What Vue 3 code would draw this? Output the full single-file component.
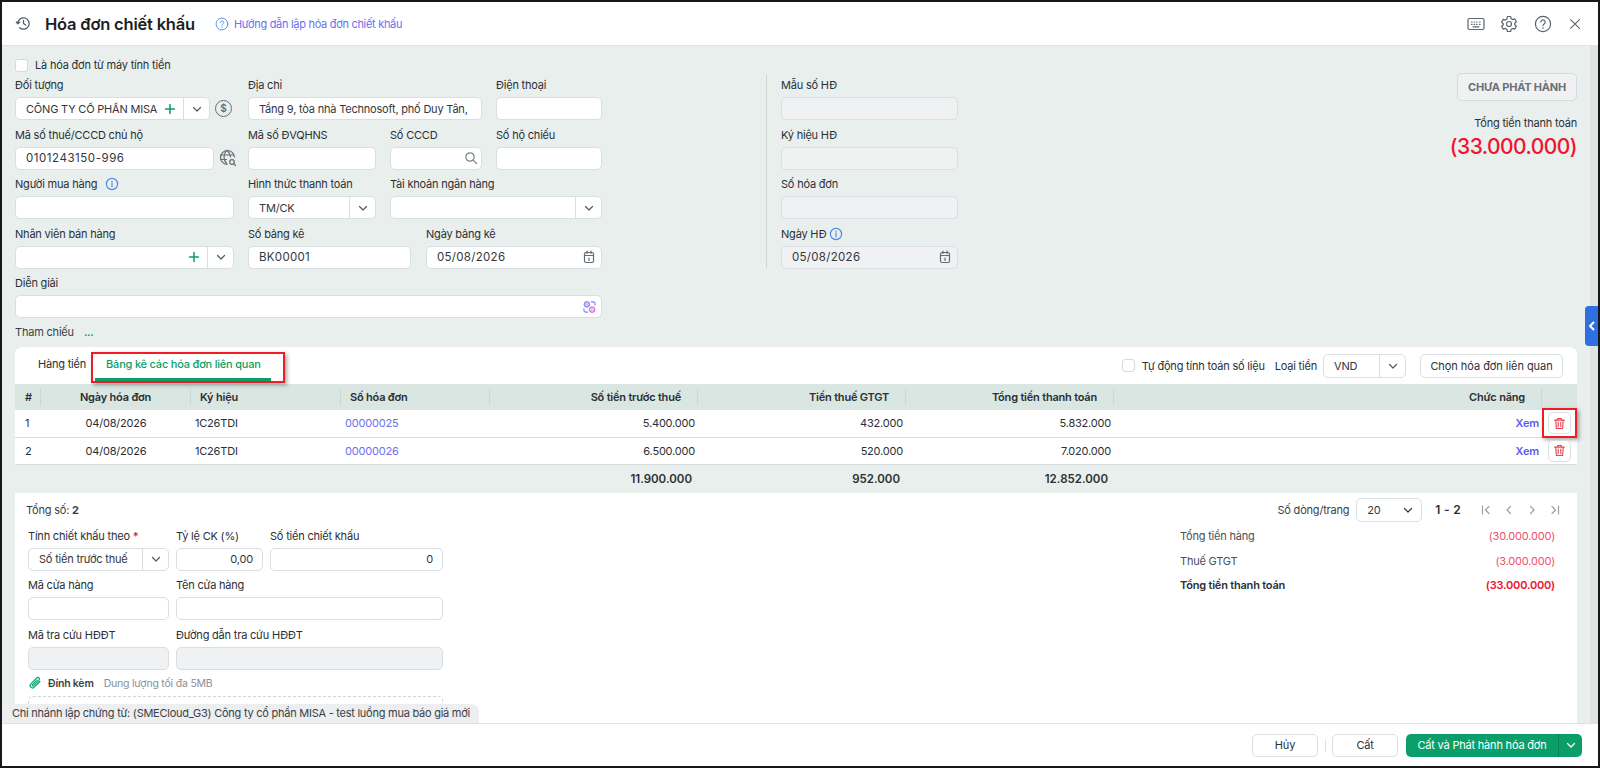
<template>
  <div class="frame">
    <svg class="defs" width="0" height="0">
      <symbol id="i-chev" viewBox="0 0 12 12"><path d="M2.500 4.500 6 8l3.500-3.500" /></symbol>
      <symbol id="i-plus" viewBox="0 0 12 12"><path d="M6 1.500v9M1.500 6h9" /></symbol>
      <symbol id="i-cal" viewBox="0 0 14 14"><rect x="2.500" y="2.500" width="9" height="10" rx="1.500" /><path d="M2.500 5.500h9M5 1v2.500M9 1v2.500M7 8v2.500" /></symbol>
      <symbol id="i-info" viewBox="0 0 14 14"><circle cx="7" cy="7" r="5.600" /><path d="M7 6.200v3.600M7 4.200v.6" /></symbol>
      <symbol id="i-help" viewBox="0 0 18 18"><circle cx="9" cy="9" r="7.600" /><path d="M6.800 7a2.200 2.200 0 1 1 3.300 2c-.7.4-1.100.8-1.100 1.600M9 12.600v.6" /></symbol>
      <symbol id="i-trash" viewBox="0 0 14 14"><path d="M1.800 3.400h10.400M5 3.200V1.600h4v1.600M3 3.400l.6 9h6.800l.6-9M5.600 5.400v5M8.400 5.400v5" /></symbol>
    </svg>

    <header class="head">
      <svg class="ic hist" viewBox="0 0 24 24"><path d="M4 12a8 8 0 1 1 2.600 5.900M1.800 9.800 4 12.400l2.600-2.200M12 7.500V12l3 2" /></svg>
      <h1 class="title">Hóa đơn chiết khấu</h1>
      <a class="guide"><svg class="ic guide-ic"><use href="#i-help" /></svg>Hướng dẫn lập hóa đơn chiết khấu</a>
      <div class="head-tools">
        <svg class="ic tool" viewBox="0 0 18 18"><rect x="1" y="3.500" width="16" height="11" rx="1.500" /><path d="M4.500 7h.6M7 7h.6M9.500 7h.6M12.500 7h.6M4.500 9.300h.6M7 9.300h.6M9.500 9.300h.6M12.500 9.300h.6M6 11.800h6" /></svg>
        <svg class="ic tool" viewBox="0 0 18 18"><path d="M7.400 1.500h3.200l.5 2.200 1.500.9 2.200-.7 1.600 2.800-1.700 1.500v1.600l1.700 1.500-1.600 2.800-2.200-.7-1.500.9-.5 2.200H7.400l-.5-2.200-1.500-.9-2.200.7-1.600-2.800 1.700-1.500V8.700L1.600 7.200l1.600-2.800 2.200.7 1.500-.9z" /><circle cx="9" cy="9" r="2.500" /></svg>
        <svg class="ic tool"><use href="#i-help" /></svg>
        <svg class="ic tool close" viewBox="0 0 18 18"><path d="m4 4 10 10M14 4 4 14" /></svg>
      </div>
    </header>

    <main class="body">
      <div class="content">
        <section class="top">
          <div class="form">
            <label class="check-row"><span class="check"></span>Là hóa đơn từ máy tính tiền</label>
            <div class="row">
              <div class="field w-195">
                <span class="lbl">Đối tượng</span>
                <div class="box">
                  <span class="val">CÔNG TY CỔ PHẦN MISA</span>
                  <svg class="ic plus"><use href="#i-plus" /></svg>
                  <span class="drop"><svg class="ic chev"><use href="#i-chev" /></svg></span>
                </div>
              </div>
              <span class="dollar">$</span>
              <div class="field w-234 ml-16">
                <span class="lbl">Địa chỉ</span>
                <div class="box"><span class="val">Tầng 9, tòa nhà Technosoft, phố Duy Tân,</span></div>
              </div>
              <div class="field w-106 ml-14">
                <span class="lbl">Điện thoại</span>
                <div class="box"></div>
              </div>
            </div>
            <div class="row">
              <div class="field w-199">
                <span class="lbl">Mã số thuế/CCCD chủ hộ</span>
                <div class="box"><span class="val spaced wide">0101243150-996</span></div>
              </div>
              <svg class="ic globe" viewBox="0 0 18 18">
                <path d="M15.500 8A7 7 0 1 0 8 15.500M1.500 6h13M1.500 10.500h6M8 1.200c-4 4-4 9.500 0 14M8 1.200c2.200 2 3.300 4.400 3.500 6.800" />
                <circle cx="13" cy="13" r="2.300" /><path d="m14.800 14.800 1.700 1.700" />
              </svg>
              <div class="field w-128 ml-11">
                <span class="lbl">Mã số ĐVQHNS</span>
                <div class="box"></div>
              </div>
              <div class="field w-92 ml-14">
                <span class="lbl">Số CCCD</span>
                <div class="box end">
                  <svg class="ic search" viewBox="0 0 14 14"><circle cx="6" cy="6" r="4.200" /><path d="m9.200 9.200 3.300 3.300" /></svg>
                </div>
              </div>
              <div class="field w-106 ml-14">
                <span class="lbl">Số hộ chiếu</span>
                <div class="box"></div>
              </div>
            </div>
            <div class="row">
              <div class="field w-219">
                <span class="lbl">Người mua hàng<svg class="ic info"><use href="#i-info" /></svg></span>
                <div class="box"></div>
              </div>
              <div class="field w-128 ml-14">
                <span class="lbl">Hình thức thanh toán</span>
                <div class="box">
                  <span class="val">TM/CK</span>
                  <span class="drop"><svg class="ic chev"><use href="#i-chev" /></svg></span>
                </div>
              </div>
              <div class="field w-212 ml-14">
                <span class="lbl">Tài khoản ngân hàng</span>
                <div class="box end">
                  <span class="drop"><svg class="ic chev"><use href="#i-chev" /></svg></span>
                </div>
              </div>
            </div>
            <div class="row">
              <div class="field w-219">
                <span class="lbl">Nhân viên bán hàng</span>
                <div class="box end">
                  <svg class="ic plus"><use href="#i-plus" /></svg>
                  <span class="drop"><svg class="ic chev"><use href="#i-chev" /></svg></span>
                </div>
              </div>
              <div class="field w-163 ml-14">
                <span class="lbl">Số bảng kê</span>
                <div class="box"><span class="val spaced">BK00001</span></div>
              </div>
              <div class="field w-176 ml-15">
                <span class="lbl">Ngày bảng kê</span>
                <div class="box">
                  <span class="val spaced">05/08/2026</span>
                  <svg class="ic cal"><use href="#i-cal" /></svg>
                </div>
              </div>
            </div>
            <div class="row">
              <div class="field w-full">
                <span class="lbl">Diễn giải</span>
                <div class="box end">
                  <svg class="ai" viewBox="0 0 14 14">
                    <circle cx="4.200" cy="4.200" r="3" fill="#c9c4f8" stroke="#7c6cf0" />
                    <circle cx="9.800" cy="9.800" r="3" fill="#f3c0f0" stroke="#c94fd8" />
                    <path d="M8.500 1.500h2.500a2 2 0 0 1 2 2v2M5.500 12.500H3a2 2 0 0 1-2-2v-2" fill="none" stroke="#6a8df0" stroke-width="1.200" />
                  </svg>
                </div>
              </div>
            </div>
          </div>

          <div class="invoice">
            <div v-for="f in invoiceFields" :key="f.label" class="field inv-field">
              <span class="lbl">{{ f.label }}<svg v-if="f.info" class="ic info info-sm"><use href="#i-info" /></svg></span>
              <div class="box disabled">
                <template v-if="f.value">
                  <span class="val spaced">{{ f.value }}</span>
                  <svg class="ic cal"><use href="#i-cal" /></svg>
                </template>
              </div>
            </div>
          </div>

          <div class="status">
            <div class="status-btn">CHƯA PHÁT HÀNH</div>
            <div class="total-lbl">Tổng tiền thanh toán</div>
            <div class="total-num">(33.000.000)</div>
          </div>
        </section>

        <div class="ref">Tham chiếu<span class="ref-dots">...</span></div>

        <section class="card">
          <div class="tabs">
            <span class="tab">Hàng tiền</span>
            <span class="tab tab-on">Bảng kê các hóa đơn liên quan<i class="mark mark-tab"></i></span>
            <div class="tabs-right">
              <span class="check"></span>
              <span class="auto">Tự động tính toán số liệu</span>
              <span class="cur-lbl">Loại tiền</span>
              <div class="box cur">
                <span class="val">VND</span>
                <span class="drop"><svg class="ic chev"><use href="#i-chev" /></svg></span>
              </div>
              <button class="btn pick">Chọn hóa đơn liên quan</button>
            </div>
          </div>

          <div class="tr th">
            <span class="c-hash">#</span>
            <span class="c-center">Ngày hóa đơn</span>
            <span class="c-th-left">Ký hiệu</span>
            <span class="c-th-left">Số hóa đơn</span>
            <span class="c-th-right">Số tiền trước thuế</span>
            <span class="c-th-right">Tiền thuế GTGT</span>
            <span class="c-th-right">Tổng tiền thanh toán</span>
            <span class="c-th-right">Chức năng</span>
            <span class="c-last"></span>
          </div>
          <div v-for="(r, i) in rows" :key="r.no" class="tr td">
            <span class="c-hash">{{ i + 1 }}</span>
            <span class="c-center">{{ r.date }}</span>
            <span class="c-left">{{ r.sign }}</span>
            <a class="c-left link">{{ r.no }}</a>
            <span class="c-right">{{ r.before }}</span>
            <span class="c-right">{{ r.tax }}</span>
            <span class="c-right">{{ r.total }}</span>
            <a class="c-right xem">Xem</a>
            <span class="c-last">
              <button class="trash"><svg class="ic trash-ic"><use href="#i-trash" /></svg></button>
              <i v-if="i === 0" class="mark mark-trash"></i>
            </span>
          </div>
          <div class="tr tf">
            <span></span><span></span><span></span><span></span>
            <span class="c-sum">11.900.000</span>
            <span class="c-sum">952.000</span>
            <span class="c-sum">12.852.000</span>
            <span></span><span></span>
          </div>

          <div class="pager">
            <span class="count">Tổng số: <b>2</b></span>
            <span class="per">Số dòng/trang</span>
            <div class="box per-box">
              <span class="val">20</span>
              <svg class="ic chev per-chev"><use href="#i-chev" /></svg>
            </div>
            <b class="range">1 - 2</b>
            <svg class="ic nav" viewBox="0 0 12 12"><path d="M2.500 2v8M9 2.500 5.500 6 9 9.500" /></svg>
            <svg class="ic nav" viewBox="0 0 12 12"><path d="M7.500 2.500 4 6l3.500 3.500" /></svg>
            <svg class="ic nav" viewBox="0 0 12 12"><path d="M4.500 2.500 8 6 4.500 9.500" /></svg>
            <svg class="ic nav" viewBox="0 0 12 12"><path d="M9.500 2v8M3 2.500 6.500 6 3 9.500" /></svg>
          </div>

          <div class="lower">
            <div class="disc">
              <div class="row">
                <div class="field w-141">
                  <span class="lbl">Tính chiết khấu theo <em class="req">*</em></span>
                  <div class="box">
                    <span class="val">Số tiền trước thuế</span>
                    <span class="drop"><svg class="ic chev"><use href="#i-chev" /></svg></span>
                  </div>
                </div>
                <div class="field w-87 ml-7">
                  <span class="lbl">Tỷ lệ CK (%)</span>
                  <div class="box"><span class="val num">0,00</span></div>
                </div>
                <div class="field w-173 ml-7">
                  <span class="lbl">Số tiền chiết khấu</span>
                  <div class="box"><span class="val num">0</span></div>
                </div>
              </div>
              <div class="row">
                <div class="field w-141">
                  <span class="lbl">Mã cửa hàng</span>
                  <div class="box"></div>
                </div>
                <div class="field w-267 ml-7">
                  <span class="lbl">Tên cửa hàng</span>
                  <div class="box"></div>
                </div>
              </div>
              <div class="row">
                <div class="field w-141">
                  <span class="lbl">Mã tra cứu HĐĐT</span>
                  <div class="box disabled"></div>
                </div>
                <div class="field w-267 ml-7">
                  <span class="lbl">Đường dẫn tra cứu HĐĐT</span>
                  <div class="box disabled"></div>
                </div>
              </div>
              <div class="attach">
                <svg class="clip" viewBox="0 0 14 14"><path d="M12 5.500 6.300 11.200a2.400 2.400 0 0 1-3.400-3.400l5.800-5.800a1.600 1.600 0 0 1 2.300 2.300L5.400 9.900a.8.800 0 0 1-1.100-1.100l5-5" /></svg>
                <b class="att-t">Đính kèm</b>
                <span class="att-s">Dung lượng tối đa 5MB</span>
              </div>
              <div class="drop-zone"></div>
            </div>

            <div class="sum">
              <div class="sum-row"><span>Tổng tiền hàng</span><span class="neg">(30.000.000)</span></div>
              <div class="sum-row"><span>Thuế GTGT</span><span class="neg">(3.000.000)</span></div>
              <div class="sum-row strong"><span>Tổng tiền thanh toán</span><span class="neg">(33.000.000)</span></div>
            </div>
          </div>
        </section>
      </div>
      <div class="scroll"></div>
      <div class="side-tab"><svg class="ic side-chev" viewBox="0 0 12 12"><path d="M7.500 2.500 4 6l3.500 3.500" /></svg></div>
      <div class="branch">Chi nhánh lập chứng từ: (SMECloud_G3) Công ty cổ phần MISA - test luồng mua báo giá mới</div>
    </main>

    <footer class="foot">
      <button class="btn act">Hủy</button>
      <span class="foot-sep"></span>
      <button class="btn act">Cất</button>
      <div class="primary">
        <span class="primary-txt">Cất và Phát hành hóa đơn</span>
        <span class="primary-drop"><svg class="ic chev"><use href="#i-chev" /></svg></span>
      </div>
    </footer>
  </div>
</template>

<script setup>
const invoiceFields = [
  { label: 'Mẫu số HĐ' },
  { label: 'Ký hiệu HĐ' },
  { label: 'Số hóa đơn' },
  { label: 'Ngày HĐ', info: true, value: '05/08/2026' },
]
const rows = [
  { date: '04/08/2026', sign: '1C26TDI', no: '00000025', before: '5.400.000', tax: '432.000', total: '5.832.000' },
  { date: '04/08/2026', sign: '1C26TDI', no: '00000026', before: '6.500.000', tax: '520.000', total: '7.020.000' },
]
</script>

<style>
html, body { margin: 0; overflow: hidden; }
</style>

<style scoped>
.frame {
  width: 1600px;
  height: 768px;
  box-sizing: border-box;
  border: 2px solid #17181a;
  display: flex;
  flex-direction: column;
  background: #fff;
  font-family: Inter, "Noto Sans", sans-serif;
  font-size: 11px;
  letter-spacing: -0.2px;
  color: #2b2f36;
}
.defs { position: absolute; }
.ic { fill: none; stroke: currentColor; stroke-width: 1.2; stroke-linecap: round; stroke-linejoin: round; flex: none; }

.head {
  height: 44px;
  flex: none;
  display: flex;
  align-items: center;
  padding-left: 13px;
  border-bottom: 1px solid #dfe3e6;
  box-sizing: border-box;
}
.hist { width: 17px; height: 17px; color: #555b63; stroke-width: 1.8; }
.title { margin: 0 0 0 13px; font-size: 16.500px; font-weight: 600; color: #1c1f24; }
.guide { display: flex; align-items: center; margin-left: 20px; color: #6b70ee; letter-spacing: -0.3px; }
.guide-ic { width: 14px; height: 14px; margin-right: 5px; color: #4f8ae6; }
.head-tools { margin-left: auto; display: flex; align-items: center; gap: 15.500px; padding-right: 15px; }
.tool { width: 18px; height: 18px; color: #5d636b; }
.close { width: 16px; height: 16px; }

.body { flex: 1; min-height: 0; display: flex; position: relative; background: #e9efed; overflow: hidden; }
.content { flex: 1; min-width: 0; padding: 11px 0 0 13px; overflow: hidden; }
.scroll { width: 8px; flex: none; background: #dfe3e3; }
.side-tab {
  position: absolute;
  right: 0;
  top: 260px;
  width: 13px;
  height: 40px;
  background: #2f6fe0;
  border-radius: 4px 0 0 4px;
  display: flex;
  align-items: center;
  justify-content: center;
  color: #fff;
}
.side-chev { width: 12px; height: 12px; stroke-width: 2; }
.branch {
  position: absolute;
  left: 0;
  bottom: 0;
  width: 467px;
  height: 19px;
  padding-left: 10px;
  line-height: 19px;
  letter-spacing: -0.25px;
  background: #eceef0;
  border-radius: 0 8px 0 0;
  color: #3a3f47;
  white-space: nowrap;
}

.top { display: flex; height: 266px; }
.form { width: 587px; flex: none; }
.check-row { display: flex; align-items: center; height: 16px; margin-bottom: 2px; gap: 7px; color: #2b2f36; }
.check { width: 13px; height: 13px; box-sizing: border-box; background: #fff; border: 1px solid #d5dade; border-radius: 3px; flex: none; }
.row { display: flex; margin-bottom: 4.500px; }
.field { display: flex; flex-direction: column; flex: none; }
.lbl { height: 20px; line-height: 20px; margin-bottom: 2px; color: #2b2f36; white-space: nowrap; display: flex; align-items: center; }
.box {
  height: 23px;
  box-sizing: border-box;
  background: #fff;
  border: 1px solid #d9dee2;
  border-radius: 5px;
  display: flex;
  align-items: center;
  color: #33373d;
  white-space: nowrap;
}
.box.end { justify-content: flex-end; }
.box.disabled { background: #f0f1f3; }
.val { flex: 1; min-width: 0; padding-left: 10px; overflow: hidden; }
.spaced { font-size: 11.500px; letter-spacing: 0.3px; }
.wide { letter-spacing: 0.55px; }
.num { text-align: right; padding: 0 9px 0 0; }
.drop { width: 26px; height: 100%; flex: none; display: flex; align-items: center; justify-content: center; border-left: 1px solid #d9dee2; box-sizing: border-box; color: #555b63; }
.chev { width: 12px; height: 12px; }
.plus { width: 12px; height: 12px; color: #0a9f6a; stroke-width: 1.500; margin: 0 7px 0 4px; }
.cal { width: 14px; height: 14px; color: #666c74; margin-right: 5px; }
.search { width: 14px; height: 14px; color: #7d838a; margin-right: 3px; }
.info { width: 14px; height: 14px; color: #4f8ae6; margin-left: 8px; }
.info-sm { margin-left: 3px; }
.ai { width: 13px; height: 14px; margin-right: 5px; }
.dollar {
  width: 17px;
  height: 17px;
  box-sizing: border-box;
  margin: 25px 0 0 5px;
  border: 1.500px solid #666c74;
  border-radius: 50%;
  color: #666c74;
  font-size: 10px;
  font-weight: 600;
  line-height: 14px;
  text-align: center;
  flex: none;
}
.globe { width: 18px; height: 18px; margin: 24px 0 0 5px; color: #666c74; }

.w-full { width: 587px; }
.w-87 { width: 87px; } .w-92 { width: 92px; } .w-106 { width: 106px; } .w-128 { width: 128px; }
.w-141 { width: 141px; } .w-163 { width: 163px; } .w-173 { width: 173px; } .w-176 { width: 176px; }
.w-195 { width: 195px; } .w-199 { width: 199px; } .w-212 { width: 212px; } .w-219 { width: 219px; }
.w-234 { width: 234px; } .w-267 { width: 267px; }
.ml-7 { margin-left: 7px; } .ml-11 { margin-left: 11px; } .ml-14 { margin-left: 14px; } .ml-15 { margin-left: 15px; } .ml-16 { margin-left: 16px; }

.invoice {
  width: 191px;
  height: 193px;
  flex: none;
  margin: 18px 0 0 164px;
  padding-left: 14px;
  box-sizing: border-box;
  border-left: 1px solid #cfd5d6;
}
.inv-field { width: 177px; margin-bottom: 4.500px; }
.status { margin-left: auto; margin-right: 13px; margin-top: 16px; display: flex; flex-direction: column; align-items: flex-end; }
.status-btn {
  width: 120px;
  height: 28px;
  box-sizing: border-box;
  border: 1px solid #d5dade;
  border-radius: 5px;
  background: #f0f1f3;
  color: #6a7078;
  font-weight: 700;
  line-height: 26px;
  text-align: center;
  white-space: nowrap;
}
.total-lbl { margin-top: 13px; line-height: 18px; }
.total-num { margin-top: 1px; font-size: 21px; letter-spacing: -0.55px; line-height: 28px; font-weight: 500; color: #f0142f; }

.ref { height: 18px; line-height: 18px; margin-top: 0; color: #3a3f47; }
.ref-dots { margin-left: 10px; color: #0a9f6a; font-weight: 700; font-size: 10px; }

.card { width: 1562px; margin-top: 6px; background: #fff; border-radius: 8px 8px 0 0; }
.tabs { height: 37px; display: flex; align-items: flex-start; padding: 0 14px 0 23px; box-sizing: border-box; }
.tab { height: 34px; line-height: 34px; color: #2b2f36; white-space: nowrap; }
.tab-on { position: relative; margin-left: 9px; width: 176px; box-sizing: border-box; padding-left: 11px; border-bottom: 3px solid #0a9f6a; color: #0a9f6a; font-weight: 500; }
.mark { position: absolute; border: 2px solid #ee1c25; box-sizing: border-box; box-shadow: 2px 2px 4px rgba(0, 0, 0, 0.35); pointer-events: none; }
.mark-tab { left: -4px; top: 5px; width: 194px; height: 31px; }
.tabs-right { margin-left: auto; height: 37px; display: flex; align-items: center; }
.auto { margin-left: 7px; white-space: nowrap; }
.cur-lbl { margin-left: 10px; white-space: nowrap; }
.cur { width: 83px; height: 24px; margin-left: 6px; }
.btn { font: inherit; letter-spacing: inherit; color: #2b2f36; background: #fff; border: 1px solid #d9dee2; border-radius: 5px; padding: 0; }
.pick { width: 143px; height: 24px; margin-left: 14px; letter-spacing: -0.05px; }

.tr { display: grid; grid-template-columns: 26px 150px 150px 149px 208px 208px 208px 428px 35px; align-items: center; }
.th { height: 26px; background: #d9e6e1; font-weight: 600; color: #2b2f36; }
.th > span { height: 18px; line-height: 18px; border-right: 1px solid #cbd9d4; box-sizing: border-box; }
.th > .c-last { border-right: 0; }
.td { height: 27.500px; border-bottom: 1px solid #d8dde0; box-sizing: border-box; }
.tf { height: 27.500px; background: #e9efed; font-weight: 600; }
.c-hash { padding-left: 10px; }
.c-center { text-align: center; }
.c-left { padding-left: 4px; }
.c-th-left { padding-left: 9px; }
.c-right { text-align: right; padding-right: 3px; }
.c-th-right { text-align: right; padding-right: 16px; }
.c-sum { text-align: right; padding-right: 6px; font-size: 11.500px; letter-spacing: 0; }
.c-last { position: relative; height: 100%; display: flex; align-items: center; padding-left: 6px; }
.link { color: #6b70ee; }
.xem { color: #5a5cf0; font-weight: 600; }
.trash { width: 23px; height: 22px; padding: 0; background: #fff; border: 1px solid #d9dee2; border-radius: 5px; display: flex; align-items: center; justify-content: center; color: #e8434f; }
.trash-ic { width: 13px; height: 13px; }
.mark-trash { left: 0; top: -2px; width: 35px; height: 30px; }

.pager { height: 29px; display: flex; align-items: center; padding: 5px 16px 0 11px; box-sizing: border-box; }
.count { margin-right: auto; color: #3a3f47; }
.per { color: #3a3f47; }
.per-box { width: 66px; height: 24px; margin-left: 7px; justify-content: space-between; }
.per-chev { margin-right: 7px; }
.range { margin-left: 13px; margin-right: 19px; font-size: 12px; letter-spacing: 0.3px; font-weight: 600; }
.nav { width: 12px; height: 12px; color: #9aa0a7; margin-right: 11px; }
.nav:last-child { margin-right: 0; }

.lower { display: flex; justify-content: space-between; }
.disc { width: 415px; margin-left: 13px; padding-top: 4px; }
.disc .row { margin-bottom: 4.500px; }
.req { color: #f0142f; font-style: normal; font-weight: 600; margin-left: 3px; }
.attach { display: flex; align-items: center; height: 18px; margin-top: 4px; }
.clip { width: 14px; height: 14px; fill: none; stroke: #0a9f6a; stroke-width: 1.100; stroke-linecap: round; }
.att-t { margin-left: 6px; font-size: 10.500px; font-weight: 600; color: #3a3f47; }
.att-s { margin-left: 10px; font-size: 10.500px; color: #8a9097; }
.drop-zone { height: 50px; margin-top: 4px; border: 1px dashed #d0d5da; border-radius: 5px; box-sizing: border-box; }

.sum { width: 375px; margin-right: 22px; padding-top: 2px; color: #4a4f57; }
.sum-row { height: 24.700px; display: flex; justify-content: space-between; align-items: center; }
.neg { color: #f0506a; }
.strong { font-weight: 600; color: #2b2f36; }
.strong .neg { color: #f0142f; }

.foot { height: 43px; flex: none; display: flex; align-items: center; justify-content: flex-end; border-top: 1px solid #dfe3e6; box-sizing: border-box; padding-right: 16px; }
.act { width: 66px; height: 23px; }
.foot-sep { width: 1px; height: 13px; background: #dfe3e6; margin: 0 6.500px; }
.primary { width: 176px; height: 23px; margin-left: 8px; background: #0a9f6a; border-radius: 5px; color: #fff; display: flex; align-items: center; }
.primary-txt { flex: 1; text-align: center; white-space: nowrap; }
.primary-drop { width: 24px; height: 100%; display: flex; align-items: center; justify-content: center; border-left: 1px solid #078456; box-sizing: border-box; }
</style>
